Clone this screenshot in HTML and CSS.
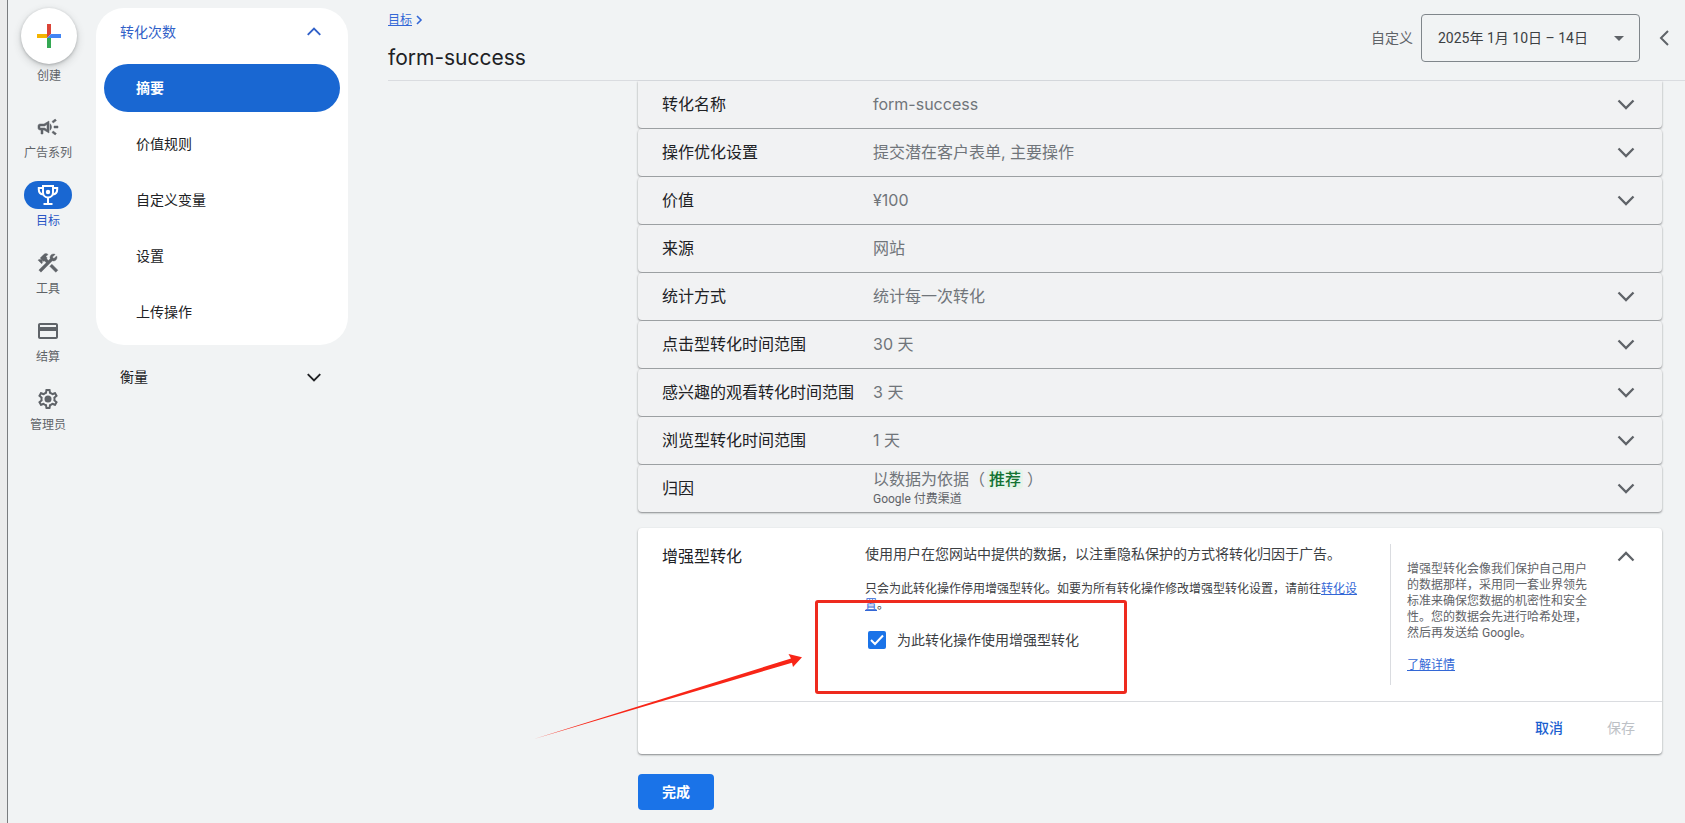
FILE: index.html
```html
<!DOCTYPE html>
<html lang="zh-CN">
<head>
<meta charset="utf-8">
<title>form-success</title>
<link rel="stylesheet" href="styles.css">
</head>
<body>
<svg class="defs" width="0" height="0" aria-hidden="true">
  <symbol id="down" viewBox="0 0 24 24"><path d="M4.500 8.500 12 16l7.500-7.500" fill="none" stroke="currentColor" stroke-width="2.300"/></symbol>
  <symbol id="up" viewBox="0 0 24 24"><path d="M4.500 15.500 12 8l7.500 7.500" fill="none" stroke="currentColor" stroke-width="2.300"/></symbol>
</svg>
<div class="app">
  <nav class="rail" aria-label="主导航">
    <button class="create">
      <span class="create-disc">
        <svg width="24" height="24" viewBox="0 0 24 24"><path fill="#db4437" d="M10 0h4v10l-4 4z"/><path fill="#f4b400" d="M0 10h10v4H0z"/><path fill="#4285f4" d="M14 10h10v4H10z"/><path fill="#34a853" d="M10 14h4v10h-4z"/></svg>
      </span>
      <span>创建</span>
    </button>
    <a class="rail-item" href="#">
      <span class="rail-icon"><svg width="24" height="24" viewBox="0 0 24 24"><path fill="currentColor" stroke="currentColor" stroke-width=".5" d="M18 11v2h4v-2h-4zm-2 6.610c.960.710 2.210 1.650 3.200 2.390.4-.530.8-1.070 1.200-1.600-.990-.740-2.240-1.680-3.200-2.400-.4.540-.8 1.080-1.200 1.610zM20.400 5.600c-.4-.530-.8-1.070-1.200-1.600-.990.740-2.240 1.680-3.200 2.400.4.530.8 1.070 1.200 1.600.960-.720 2.210-1.650 3.200-2.400zM4 9c-1.100 0-2 .9-2 2v2c0 1.100.9 2 2 2h1v4h2v-4h1l5 3V6L8 9H4zm5.030 1.710L11 9.530v4.940l-1.970-1.180-.480-.290H4v-2h4.550l.480-.290zM15.500 12c0-1.330-.580-2.530-1.500-3.350v6.690c.920-.810 1.500-2.010 1.500-3.340z"/></svg></span>
      <span>广告系列</span>
    </a>
    <a class="rail-item active" href="#" aria-current="page">
      <span class="rail-icon"><svg width="24" height="24" viewBox="0 0 24 24"><g fill="none" stroke="currentColor" stroke-width="2"><path d="M7 3h10v6.500a5 5 0 0 1-10 0z"/><path d="M7 5H2.800v1.500c0 2.700 1.800 4.700 4.500 4.900M17 5h4.200v1.500c0 2.700-1.800 4.700-4.500 4.900M12 14v7M7.500 21h9"/></g><circle cx="12" cy="9" r="2.200" fill="currentColor"/></svg></span>
      <span>目标</span>
    </a>
    <a class="rail-item" href="#">
      <span class="rail-icon"><svg width="24" height="24" viewBox="0 0 24 24" fill="currentColor" stroke="currentColor" stroke-width=".4"><path d="m13.780 15.300 2.120-2.120 6 6-2.120 2.120z"/><path d="M17.500 10c1.930 0 3.500-1.570 3.500-3.500 0-.580-.160-1.120-.410-1.600l-2.700 2.700-1.490-1.490 2.700-2.700C18.620 3.160 18.080 3 17.500 3 15.570 3 14 4.570 14 6.500c0 .410.080.8.210 1.160l-1.850 1.850-1.780-1.780.710-.710-1.410-1.410L12 3.490c-1.170-1.170-3.070-1.170-4.240 0L4.220 7.030l1.410 1.410H2.810l-.710.710 3.540 3.540.710-.710V9.150l1.410 1.410.710-.710 1.780 1.780-7.410 7.410 2.120 2.120L16.340 9.790c.360.130.750.210 1.160.210z"/></svg></span>
      <span>工具</span>
    </a>
    <a class="rail-item" href="#">
      <span class="rail-icon"><svg width="24" height="24" viewBox="0 0 24 24"><path fill="currentColor" d="M20 4H4c-1.110 0-2 .890-2 2v12c0 1.110.890 2 2 2h16c1.110 0 2-.890 2-2V6c0-1.110-.890-2-2-2zm0 14H4v-6h16v6zm0-10H4V6h16v2z"/></svg></span>
      <span>结算</span>
    </a>
    <a class="rail-item" href="#">
      <span class="rail-icon"><svg width="24" height="24" viewBox="0 0 24 24" fill="currentColor"><path d="M19.430 12.980c.040-.320.070-.640.070-.980 0-.340-.030-.660-.070-.980l2.110-1.650c.190-.150.240-.420.120-.640l-2-3.460c-.090-.160-.260-.250-.440-.250-.060 0-.120.010-.170.030l-2.490 1c-.520-.4-1.080-.730-1.690-.980l-.380-2.650C14.460 2.180 14.250 2 14 2h-4c-.250 0-.460.180-.490.420l-.380 2.650c-.610.250-1.170.590-1.690.980l-2.490-1c-.060-.020-.120-.030-.180-.030-.170 0-.340.090-.430.250l-2 3.460c-.130.220-.070.490.120.640l2.110 1.650c-.040.320-.070.650-.070.980 0 .330.030.660.070.980l-2.110 1.650c-.190.150-.240.420-.120.640l2 3.460c.090.160.260.250.440.250.060 0 .120-.010.170-.030l2.490-1c.520.4 1.080.730 1.690.980l.380 2.650c.030.240.240.420.490.420h4c.250 0 .460-.180.490-.420l.380-2.650c.610-.250 1.170-.590 1.690-.980l2.490 1c.060.020.120.030.180.030.170 0 .340-.090.430-.250l2-3.460c.120-.220.070-.490-.120-.640l-2.110-1.650zm-1.980-1.710c.040.310.050.520.050.730 0 .210-.020.430-.050.730l-.140 1.130.890.7 1.080.840-.7 1.210-1.270-.510-1.040-.420-.9.680c-.430.320-.840.560-1.250.730l-1.060.430-.160 1.130-.2 1.350h-1.400l-.190-1.350-.160-1.130-1.060-.430c-.430-.180-.830-.410-1.230-.710l-.910-.7-1.060.430-1.270.510-.7-1.210 1.080-.840.890-.7-.140-1.130c-.030-.310-.050-.540-.050-.740s.020-.430.050-.730l.140-1.130-.890-.7-1.080-.840.7-1.210 1.270.510 1.040.420.9-.680c.430-.320.840-.560 1.250-.730l1.060-.430.160-1.130.2-1.350h1.390l.190 1.350.160 1.130 1.060.430c.430.180.830.410 1.230.710l.910.7 1.060-.430 1.270-.510.7 1.210-1.070.850-.890.7.140 1.130z"/><circle cx="12" cy="12" r="3.500"/></svg></span>
      <span>管理员</span>
    </a>
  </nav>

  <aside class="side">
    <section class="side-panel">
      <button class="side-head blue" aria-expanded="true">转化次数<svg width="20" height="20"><use href="#up"/></svg></button>
      <a class="side-link selected" href="#">摘要</a>
      <a class="side-link" href="#">价值规则</a>
      <a class="side-link" href="#">自定义变量</a>
      <a class="side-link" href="#">设置</a>
      <a class="side-link" href="#">上传操作</a>
    </section>
    <button class="side-head" aria-expanded="false">衡量<svg width="20" height="20"><use href="#down"/></svg></button>
  </aside>

  <main class="main">
    <header class="top">
      <div class="titles">
        <div class="crumb"><a href="#">目标</a><svg width="8" height="12" viewBox="0 0 8 12"><path d="m2 2 4 4-4 4" fill="none" stroke="#3367d6" stroke-width="1.600"/></svg></div>
        <h1>form-success</h1>
      </div>
      <div class="range">
        <label for="range">自定义</label>
        <div class="select">
          <select id="range"><option>2025年 1月 10日 – 14日</option></select>
          <svg width="10" height="5" viewBox="0 0 10 5"><path fill="#5f6368" d="M0 0h10L5 5z"/></svg>
        </div>
        <button class="prev" aria-label="上一时段"><svg width="12" height="18" viewBox="0 0 12 18"><path d="M10 2 3 9l7 7" fill="none" stroke="#5f6368" stroke-width="2"/></svg></button>
      </div>
    </header>

    <div class="content">
      <div class="rows">
        <button class="row"><span class="name">转化名称</span><span class="value">form-success</span><svg width="24" height="24"><use href="#down"/></svg></button>
        <button class="row"><span class="name">操作优化设置</span><span class="value">提交潜在客户表单, 主要操作</span><svg width="24" height="24"><use href="#down"/></svg></button>
        <button class="row"><span class="name">价值</span><span class="value">¥100</span><svg width="24" height="24"><use href="#down"/></svg></button>
        <div class="row"><span class="name">来源</span><span class="value">网站</span></div>
        <button class="row"><span class="name">统计方式</span><span class="value">统计每一次转化</span><svg width="24" height="24"><use href="#down"/></svg></button>
        <button class="row"><span class="name">点击型转化时间范围</span><span class="value">30 天</span><svg width="24" height="24"><use href="#down"/></svg></button>
        <button class="row"><span class="name">感兴趣的观看转化时间范围</span><span class="value">3 天</span><svg width="24" height="24"><use href="#down"/></svg></button>
        <button class="row"><span class="name">浏览型转化时间范围</span><span class="value">1 天</span><svg width="24" height="24"><use href="#down"/></svg></button>
        <button class="row"><span class="name">归因</span><span class="value">以数据为依据（<span class="tag">推荐</span>）<small>Google 付费渠道</small></span><svg width="24" height="24"><use href="#down"/></svg></button>
      </div>

      <section class="card">
        <div class="card-body">
          <h2>增强型转化</h2>
          <div class="detail">
            <p class="intro">使用用户在您网站中提供的数据，以注重隐私保护的方式将转化归因于广告。</p>
            <p class="note">只会为此转化操作停用增强型转化。如要为所有转化操作修改增强型转化设置，请前往<a href="#">转化设置</a>。</p>
            <label class="check"><input type="checkbox" checked><svg width="18" height="18" viewBox="0 0 18 18"><path d="m3 9 4 4 8-8.500" fill="none" stroke="#fff" stroke-width="2"/></svg><span>为此转化操作使用增强型转化</span></label>
          </div>
          <aside class="help">
            <p>增强型转化会像我们保护自己用户的数据那样，采用同一套业界领先标准来确保您数据的机密性和安全性。您的数据会先进行哈希处理，然后再发送给 Google。</p>
            <a href="#">了解详情</a>
          </aside>
          <button class="collapse" aria-label="收起"><svg width="24" height="24"><use href="#up"/></svg></button>
        </div>
        <footer class="card-foot">
          <button class="cancel">取消</button>
          <button class="save" disabled>保存</button>
        </footer>
        <div class="mark-box"></div>
        <svg class="mark-arrow" width="274" height="92" viewBox="0 0 274 92"><path fill="#f82517" d="M4 89 261 8.500 258.500 4 272 7.300 263 17l-1-4.300z"/></svg>
      </section>
      <button class="done">完成</button>
    </div>
  </main>
</div>
</body>
</html>
```
FILE: styles.css
```css
* { box-sizing: border-box; }
body {
  margin: 0;
  min-height: 100vh;
  background: #f1f3f4;
  color: #202124;
  font: 14px/20px Roboto, "Noto Sans CJK SC", sans-serif;
}
h1, h2, p { margin: 0; font-weight: 400; }
button { border: 0; padding: 0; background: none; color: inherit; font: inherit; text-align: left; cursor: pointer; }
a { color: #3367d6; }
svg { display: block; flex: none; }
.defs { position: absolute; }

.app { display: flex; min-height: 100vh; border-left: 7px solid #ebebeb; }

/* Icon rail */
.rail {
  flex: none;
  display: flex;
  flex-direction: column;
  align-items: center;
  gap: 20px;
  width: 89px;
  padding: 8px 8px 0 0;
  border-left: 1px solid #7a7c7e;
  color: #5f6368;
  font-size: 12px;
  line-height: 16px;
}
.create, .rail-item { display: flex; flex-direction: column; align-items: center; gap: 4px; color: inherit; text-decoration: none; }
.create { margin: 0 0 9px 2px; }
.create-disc {
  display: grid;
  place-items: center;
  width: 56px;
  height: 56px;
  border-radius: 50%;
  background: #fff;
  box-shadow: 0 1px 3px rgba(60, 64, 67, .3), 0 3px 8px rgba(60, 64, 67, .2);
}
.rail-icon { display: grid; place-items: center; width: 48px; height: 28px; border-radius: 14px; }
.active { color: #2a56c6; }
.active .rail-icon { background: #1967d2; color: #fff; }

/* Section menu */
.side { flex: none; width: 252px; padding-top: 8px; }
.side-panel { padding-bottom: 1px; border-radius: 28px; background: #fff; }
.side-head {
  display: flex;
  align-items: center;
  justify-content: space-between;
  width: 100%;
  height: 48px;
  padding: 0 24px;
}
.side-panel + .side-head { margin-top: 8px; }
.side-head.blue { color: #3060c8; }
.side-link {
  display: flex;
  align-items: center;
  height: 48px;
  margin: 8px;
  padding-left: 32px;
  border-radius: 24px;
  color: #202124;
  text-decoration: none;
}
.side-link.selected { background: #1967d2; color: #fff; font-weight: 700; }

/* Page header */
.main { flex: 1; min-width: 0; padding-left: 40px; }
.top {
  display: flex;
  justify-content: space-between;
  min-height: 81px;
  padding-right: 9px;
  border-bottom: 1px solid #dadce0;
}
.crumb { display: flex; align-items: center; gap: 3px; margin-top: 12px; font-size: 12px; line-height: 16px; }
h1 { margin-top: 16px; font: 21px/28px Inter, "Noto Sans CJK SC", sans-serif; }
.range { display: flex; align-items: flex-start; gap: 8px; padding-top: 14px; color: #5f6368; line-height: 48px; }
.select { display: grid; align-items: center; width: 219px; }
.select > * { grid-area: 1 / 1; }
.select > svg { justify-self: end; margin-right: 16px; pointer-events: none; }
select {
  width: 100%;
  height: 48px;
  padding: 0 32px 0 16px;
  border: 1px solid #80868b;
  border-radius: 4px;
  appearance: none;
  background: none;
  color: #3c4043;
  font: inherit;
  line-height: 20px;
}
.prev { display: grid; place-items: center; width: 24px; height: 48px; margin-left: 4px; }

/* Setting rows */
.content { padding: 0 23px 0 250px; }
.rows { display: grid; gap: 1px; }
.row {
  display: flex;
  align-items: center;
  width: 100%;
  min-height: 47px;
  padding: 0 24px 2px;
  border-radius: 0 0 4px 4px;
  background: #f1f2f3;
  box-shadow: 0 1px 2px rgba(60, 64, 67, .6);
  color: #5f6368;
  font: 16px/20px Inter, "Noto Sans CJK SC", sans-serif;
}
.row + .row { border-radius: 4px; }
.name { flex: none; width: 211px; color: #202124; }
.value { flex: 1; color: #70757a; }
.value small { display: block; margin-top: 2px; color: #5f6368; font: 12px/16px Roboto, "Noto Sans CJK SC", sans-serif; }
.tag { margin: 0 4px 0 2px; padding: 0 2px; border-radius: 4px; background: #e6f4ea; color: #137333; font-weight: 500; }

/* Enhanced conversions */
.card {
  position: relative;
  margin-top: 16px;
  border-radius: 4px;
  background: #fff;
  box-shadow: 0 1px 2px rgba(60, 64, 67, .6);
}
.card-body { display: flex; gap: 24px; padding: 16px 24px; }
h2 { flex: none; width: 179px; padding-top: 3px; font-size: 16px; line-height: 20px; }
.detail { flex: 1; color: #3c4043; }
.note { margin: 17px 0; font-size: 12px; line-height: 16px; }
.check { display: inline-grid; grid-template-columns: 18px auto; align-items: center; column-gap: 11px; padding-left: 3px; }
.check input { grid-area: 1 / 1; width: 18px; height: 18px; margin: 0; border-radius: 2px; appearance: none; background: #1a73e8; }
.check svg { grid-area: 1 / 1; pointer-events: none; opacity: 0; }
.check input:checked + svg { opacity: 1; }
.help {
  flex: none;
  width: 200px;
  min-height: 141px;
  padding: 17px 0 12px 16px;
  border-left: 1px solid #dadce0;
  color: #5f6368;
  font-size: 12px;
  line-height: 16px;
}
.help p { margin-bottom: 16px; }
.collapse { align-self: flex-start; padding-top: 1px; color: #5f6368; }
.card-foot { display: flex; justify-content: flex-end; gap: 44px; padding: 16px 27px; border-top: 1px solid #dadce0; }
.cancel { color: #1a5fd0; font-weight: 500; }
.save { color: #bdc1c6; cursor: default; }
.done {
  margin: 20px 0 12px;
  padding: 8px 24px;
  border-radius: 4px;
  background: #1a73e8;
  color: #fff;
  font-weight: 700;
}

/* Callout drawn over the card */
.mark-box { position: absolute; left: 177px; top: 72px; width: 312px; height: 94px; border: 3px solid #ee2a1e; border-radius: 3px; pointer-events: none; }
.mark-arrow { position: absolute; left: -108px; top: 122px; pointer-events: none; }
```
